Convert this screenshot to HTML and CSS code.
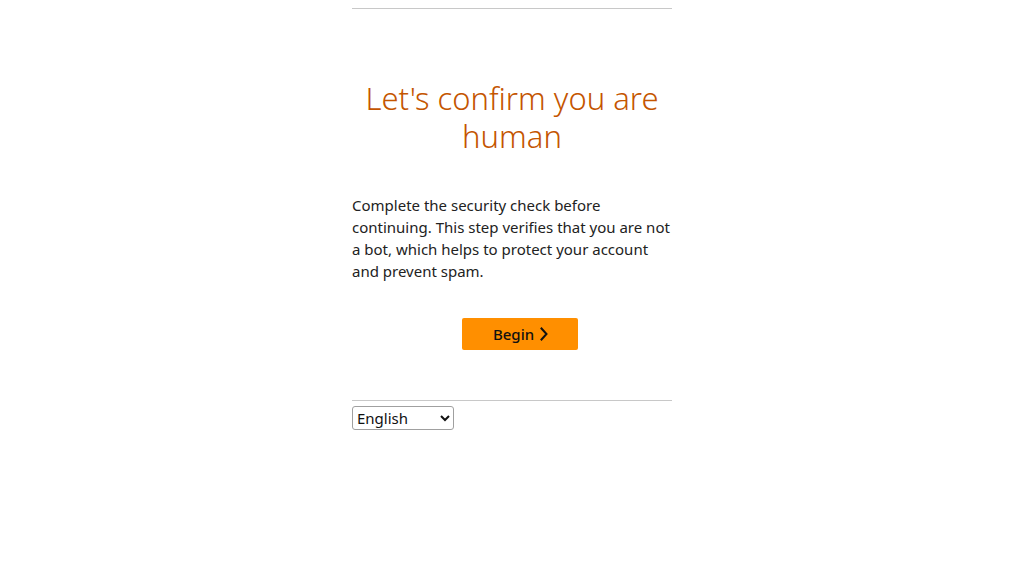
FILE: index.html
```html
<!DOCTYPE html>
<html lang="en">
<head>
<meta charset="utf-8">
<title>Let's confirm you are human</title>
<link rel="stylesheet" href="styles.css">
</head>
<body>
<main class="page">
  <section class="card">
    <h1 class="title">Let's confirm you are human</h1>
    <p class="lead">Complete the security check before continuing. This step verifies that you are not a bot, which helps to protect your account and prevent spam.</p>
    <div class="actions">
      <button class="begin" type="button">Begin
        <svg class="chev" width="10" height="14" viewBox="0 0 10 14" aria-hidden="true"><path d="M2.5 1.5 L7.5 7 L2.5 12.5" fill="none" stroke="#111" stroke-width="2" stroke-linecap="square" stroke-linejoin="miter"/></svg>
      </button>
    </div>
  </section>
  <footer class="foot">
    <select class="lang">
      <option>English</option>
      <option>Español</option>
      <option>Deutsch</option>
    </select>
  </footer>
</main>
</body>
</html>
```
FILE: styles.css
```css
html, body {
  margin: 0;
  padding: 0;
  background: #fff;
}
body {
  padding-top: 8px;
  font-family: "Noto Sans", "Open Sans", sans-serif;
  color: #111;
}
.page {
  width: 320px;
  margin: 0 auto;
}
.card {
  border-top: 1px solid #c8c8c8;
  padding-top: 70px;
}
.title {
  margin: 0;
  font-weight: 300;
  font-size: 31px;
  line-height: 38px;
  text-align: center;
  color: #c45500;
}
.lead {
  margin: 39px 0 0;
  font-size: 15px;
  line-height: 22px;
  color: #222;
}
.actions {
  display: flex;
  justify-content: center;
  padding-left: 16px;
  margin-top: 36px;
}
.begin {
  display: flex;
  align-items: center;
  justify-content: center;
  gap: 5px;
  width: 116px;
  height: 32px;
  background: #ff8f00;
  border: none;
  border-radius: 2px;
  font-family: inherit;
  font-size: 15px;
  font-weight: 500;
  color: #111;
  padding: 0 0 0 2px;
  cursor: pointer;
}
.chev {
  display: block;
}
.foot {
  margin-top: 50px;
  border-top: 1px solid #c8c8c8;
  padding-top: 5px;
}
.lang {
  width: 102px;
  height: 24px;
  font-family: inherit;
  font-size: 15px;
  color: #111;
  border: 1px solid #a0a0a0;
  border-radius: 3px;
  background: #fff;
  padding: 0;
}
```
